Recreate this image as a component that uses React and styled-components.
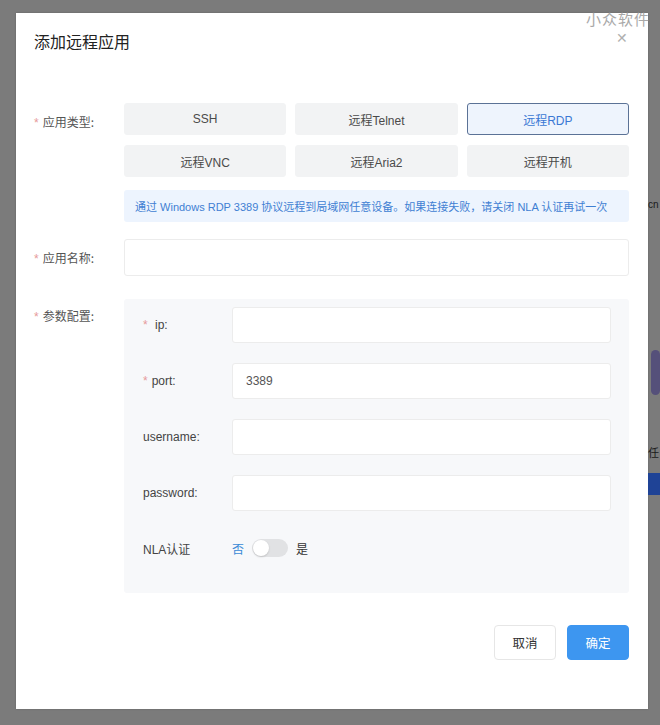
import React from "react";
import styled, { createGlobalStyle } from "styled-components";

const GlobalStyle = createGlobalStyle`
  html, body {
    margin: 0;
    padding: 0;
    background: #7b7b7b;
  }
  body {
    font-family: "Liberation Sans", "Noto Sans CJK SC", sans-serif;
  }
  * { box-sizing: border-box; }
`;

const Page = styled.div`
  position: relative;
  width: 660px;
  height: 725px;
  display: flex;
  padding: 13px 0 0 16px;
  overflow: hidden;
`;

const Backdrop = styled.div`
  flex: 1;
  min-width: 0;
  display: flex;
  flex-direction: column;
  padding-top: 179px;
  font-size: 13px;
  color: #1a1a1a;
`;

const BackText = styled.div`
  height: ${(p) => p.h}px;
  margin-top: ${(p) => p.mt || 0}px;
  font-size: ${(p) => p.fs || 13}px;
  line-height: ${(p) => p.h}px;
  white-space: nowrap;
`;

const BackBlock = styled.div`
  height: ${(p) => p.h}px;
  margin-top: ${(p) => p.mt || 0}px;
  margin-left: ${(p) => p.ml || 0}px;
  background: ${(p) => p.bg};
  border-radius: ${(p) => p.r || 0}px;
`;

const Watermark = styled.div`
  position: absolute;
  top: 8px;
  right: 10px;
  font-family: "Noto Sans CJK SC", sans-serif;
  font-size: 15px;
  letter-spacing: 1px;
  color: #9a9a9a;
  opacity: 0.85;
`;

const Modal = styled.div`
  flex-shrink: 0;
  width: 632px;
  height: 696px;
  background: #fff;
  display: flex;
  flex-direction: column;
  padding: 0 19px 0 18px;
  box-shadow: 0 0 2px rgba(0, 0, 0, 0.2);
`;

const Header = styled.div`
  display: flex;
  justify-content: space-between;
  align-items: center;
  height: 56px;
`;

const Title = styled.div`
  font-family: "Noto Sans CJK SC", sans-serif;
  font-size: 16px;
  color: #222;
`;

const Close = styled.div`
  color: #b0b0b0;
  font-size: 14px;
  margin-right: 1px;
  margin-top: -6px;
  font-family: "DejaVu Sans", sans-serif;
  font-weight: 300;
`;

const Form = styled.div`
  display: flex;
  flex-direction: column;
  padding-top: 34px;
`;

const FormItem = styled.div`
  display: flex;
  align-items: flex-start;
  margin-bottom: ${(p) => p.mb || 0}px;
`;

const Label = styled.div`
  width: 90px;
  flex-shrink: 0;
  font-family: "Noto Sans CJK SC", sans-serif;
  font-size: 12px;
  color: #555;
  line-height: ${(p) => p.lh || 36}px;
  padding-top: ${(p) => p.pt || 0}px;
  white-space: nowrap;
`;

const Star = styled.span`
  color: #e69a9a;
  margin-right: 4px;
  font-family: "Liberation Sans", sans-serif;
`;

const Field = styled.div`
  flex: 1;
  display: flex;
  flex-direction: column;
`;

const OptionGrid = styled.div`
  display: grid;
  grid-template-columns: repeat(3, 1fr);
  gap: 10px 9px;
`;

const Option = styled.div`
  height: 32px;
  display: flex;
  align-items: center;
  justify-content: center;
  border-radius: 3px;
  font-family: "Liberation Sans", "Noto Sans CJK SC", sans-serif;
  font-size: 12px;
  background: ${(p) => (p.active ? "#eef4fd" : "#f2f3f4")};
  color: ${(p) => (p.active ? "#3a78d4" : "#4a4a4a")};
  border: 1px solid ${(p) => (p.active ? "#5b7296" : "#f2f3f4")};
`;

const Info = styled.div`
  margin-top: 13px;
  height: 32px;
  display: flex;
  align-items: center;
  padding-left: 11px;
  background: #edf4fe;
  border-radius: 3px;
  color: #3f7fd3;
  font-family: "Liberation Sans", "Noto Sans CJK SC", sans-serif;
  font-size: 11px;
  white-space: nowrap;
`;

const Input = styled.div`
  height: ${(p) => p.h || 36}px;
  background: #fff;
  border: 1px solid #ececec;
  border-radius: 3px;
  display: flex;
  align-items: center;
  padding-left: 13px;
  font-family: "Liberation Sans", sans-serif;
  font-size: 12px;
  color: #555;
  flex: 1;
`;

const Panel = styled.div`
  flex: 1;
  background: #f7f8fa;
  border-radius: 3px;
  padding: 8px 18px 0 19px;
  height: 294px;
  display: flex;
  flex-direction: column;
`;

const PanelRow = styled.div`
  display: flex;
  align-items: center;
  margin-bottom: ${(p) => p.mb || 0}px;
  padding-top: ${(p) => p.pt || 0}px;
`;

const PanelLabel = styled.div`
  width: 89px;
  flex-shrink: 0;
  font-family: "Liberation Sans", "Noto Sans CJK SC", sans-serif;
  font-size: 12px;
  color: #444;
`;

const SwitchWrap = styled.div`
  display: flex;
  align-items: center;
  gap: 8px;
  font-family: "Noto Sans CJK SC", sans-serif;
  font-size: 12px;
`;

const SwitchText = styled.span`
  color: ${(p) => (p.active ? "#3a8ad6" : "#333")};
`;

const Track = styled.div`
  width: 36px;
  height: 18px;
  border-radius: 9px;
  background: #e1e2e4;
  display: flex;
  align-items: center;
  padding-left: 1px;
`;

const Knob = styled.div`
  width: 16px;
  height: 16px;
  border-radius: 50%;
  background: #fff;
  box-shadow: 0 1px 2px rgba(0, 0, 0, 0.15);
`;

const Footer = styled.div`
  display: flex;
  justify-content: flex-end;
  gap: 11px;
  margin-top: 32px;
`;

const Button = styled.div`
  width: 62px;
  height: 35px;
  border-radius: 4px;
  display: flex;
  align-items: center;
  justify-content: center;
  font-family: "Noto Sans CJK SC", sans-serif;
  font-size: 12.5px;
  background: ${(p) => (p.primary ? "#3d96f0" : "#fff")};
  color: ${(p) => (p.primary ? "#fff" : "#333")};
  border: 1px solid ${(p) => (p.primary ? "#3d96f0" : "#e6e6e6")};
`;

const options = ["SSH", "远程Telnet", "远程RDP", "远程VNC", "远程Aria2", "远程开机"];

const params = [
  { name: "ip", required: true },
  { name: "port", required: true, value: "3389" },
  { name: "username" },
  { name: "password" },
];

export default function App() {
  return (
    <>
      <GlobalStyle />
      <Page>
        <Modal>
          <Header>
            <Title>添加远程应用</Title>
            <Close>✕</Close>
          </Header>
          <Form>
            <FormItem mb={17}>
              <Label lh={20} pt={9}>
                <Star>*</Star>应用类型:
              </Label>
              <Field>
                <OptionGrid>
                  {options.map((o) => (
                    <Option key={o} active={o === "远程RDP"}>
                      {o}
                    </Option>
                  ))}
                </OptionGrid>
                <Info>
                  通过 Windows RDP 3389 协议远程到局域网任意设备。如果连接失败，请关闭 NLA 认证再试一次
                </Info>
              </Field>
            </FormItem>
            <FormItem mb={21}>
              <Label lh={37}>
                <Star>*</Star>应用名称:
              </Label>
              <Input h={37} />
            </FormItem>
            <FormItem>
              <Label lh={20} pt={7}>
                <Star>*</Star>参数配置:
              </Label>
              <Panel>
                {params.map((p) => (
                  <PanelRow key={p.name} mb={20}>
                    <PanelLabel>
                      {p.required && <Star>*</Star>}
                      {p.name === "ip" ? " ip" : p.name}:
                    </PanelLabel>
                    <Input>{p.value}</Input>
                  </PanelRow>
                ))}
                <PanelRow pt={8}>
                  <PanelLabel>NLA认证</PanelLabel>
                  <SwitchWrap>
                    <SwitchText active>否</SwitchText>
                    <Track>
                      <Knob />
                    </Track>
                    <SwitchText>是</SwitchText>
                  </SwitchWrap>
                </PanelRow>
              </Panel>
            </FormItem>
            <Footer>
              <Button>取消</Button>
              <Button primary>确定</Button>
            </Footer>
          </Form>
        </Modal>
        <Backdrop>
          <BackText h={26} fs={10}>cn</BackText>
          <BackBlock h={45} mt={132} ml={3} bg="#55507a" r={8} />
          <BackText h={30} mt={43} fs={11}>任</BackText>
          <BackBlock h={22} mt={5} bg="#1f4396" />
        </Backdrop>
        <Watermark>小众软件</Watermark>
      </Page>
    </>
  );
}
